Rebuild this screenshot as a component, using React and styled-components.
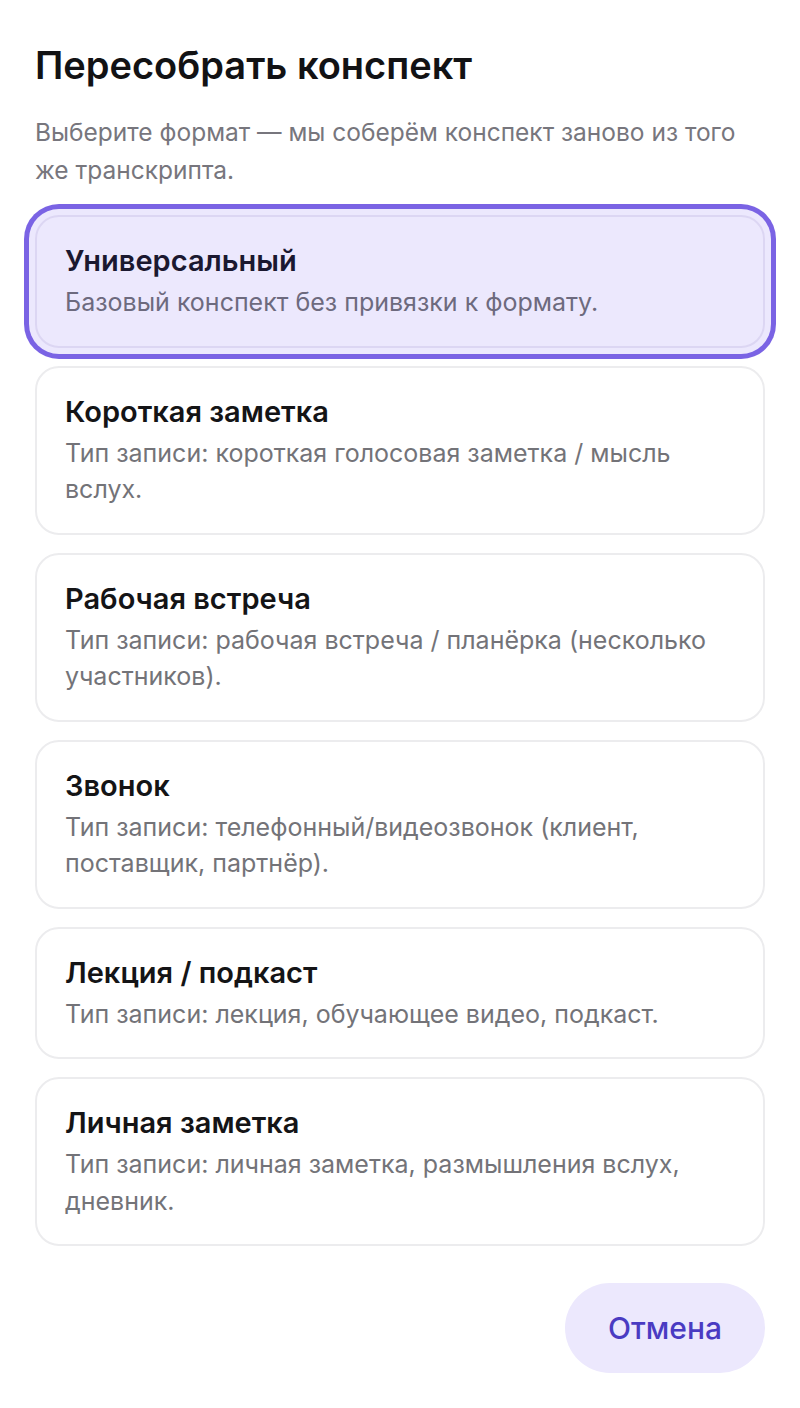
import React, { useState } from "react";
import styled, { createGlobalStyle } from "styled-components";

const GlobalStyle = createGlobalStyle`
  html, body {
    margin: 0;
    padding: 0;
    background: #ffffff;
  }
  body {
    font-family: Inter, "Noto Sans", "DejaVu Sans", sans-serif;
    -webkit-font-smoothing: antialiased;
  }
`;

const Sheet = styled.div`
  width: 800px;
  min-height: 1408px;
  box-sizing: border-box;
  padding: 42px 35px 36px;
  display: flex;
  flex-direction: column;
`;

const Title = styled.h1`
  margin: 0;
  font-size: 38px;
  line-height: 46px;
  font-weight: 600;
  letter-spacing: 0;
  color: #121214;
`;

const Subtitle = styled.p`
  margin: 25px 0 0;
  font-size: 24.5px;
  line-height: 38px;
  font-weight: 400;
  color: #77767d;
`;

const List = styled.div`
  margin-top: 26px;
  display: flex;
  flex-direction: column;
  gap: 18px;
`;

const Option = styled.button`
  display: flex;
  flex-direction: column;
  gap: 5px;
  text-align: left;
  width: 100%;
  box-sizing: border-box;
  padding: 26px 28px 25px;
  border-radius: 24px;
  border: 2px solid ${(p) => (p.$active ? "#dcd6f3" : "#ececee")};
  background: ${(p) => (p.$active ? "#ece8fd" : "#ffffff")};
  box-shadow: ${(p) =>
    p.$active ? "0 0 0 6px #ece8fd, 0 0 0 11px #7a63e4" : "none"};
  font-family: inherit;
  cursor: pointer;
`;

const OptionTitle = styled.span`
  font-size: 29px;
  line-height: 36px;
  font-weight: 600;
  color: ${(p) => (p.$active ? "#1b1830" : "#141416")};
`;

const OptionText = styled.span`
  font-size: 25px;
  line-height: 36.5px;
  font-weight: 400;
  color: ${(p) => (p.$active ? "#6d6a7e" : "#737378")};
`;

const Footer = styled.div`
  margin-top: 37px;
  display: flex;
  justify-content: flex-end;
`;

const CancelButton = styled.button`
  width: 200px;
  height: 90px;
  border: none;
  border-radius: 45px;
  background: #ece8fd;
  color: #4a3bc2;
  font-family: inherit;
  font-size: 30px;
  font-weight: 500;
  cursor: pointer;
`;

const formats = [
  {
    id: "universal",
    title: "Универсальный",
    text: "Базовый конспект без привязки к формату.",
  },
  {
    id: "short",
    title: "Короткая заметка",
    text: "Тип записи: короткая голосовая заметка / мысль вслух.",
  },
  {
    id: "meeting",
    title: "Рабочая встреча",
    text: "Тип записи: рабочая встреча / планёрка (несколько участников).",
  },
  {
    id: "call",
    title: "Звонок",
    text: "Тип записи: телефонный/видеозвонок (клиент, поставщик, партнёр).",
  },
  {
    id: "lecture",
    title: "Лекция / подкаст",
    text: "Тип записи: лекция, обучающее видео, подкаст.",
  },
  {
    id: "personal",
    title: "Личная заметка",
    text: "Тип записи: личная заметка, размышления вслух, дневник.",
  },
];

const App = () => {
  const [selected, setSelected] = useState("universal");

  return (
    <>
      <GlobalStyle />
      <Sheet>
        <Title>Пересобрать конспект</Title>
        <Subtitle>
          Выберите формат — мы соберём конспект заново из того же транскрипта.
        </Subtitle>
        <List>
          {formats.map((f) => (
            <Option
              key={f.id}
              $active={selected === f.id}
              onClick={() => setSelected(f.id)}
            >
              <OptionTitle $active={selected === f.id}>{f.title}</OptionTitle>
              <OptionText $active={selected === f.id}>{f.text}</OptionText>
            </Option>
          ))}
        </List>
        <Footer>
          <CancelButton>Отмена</CancelButton>
        </Footer>
      </Sheet>
    </>
  );
};

export default App;
